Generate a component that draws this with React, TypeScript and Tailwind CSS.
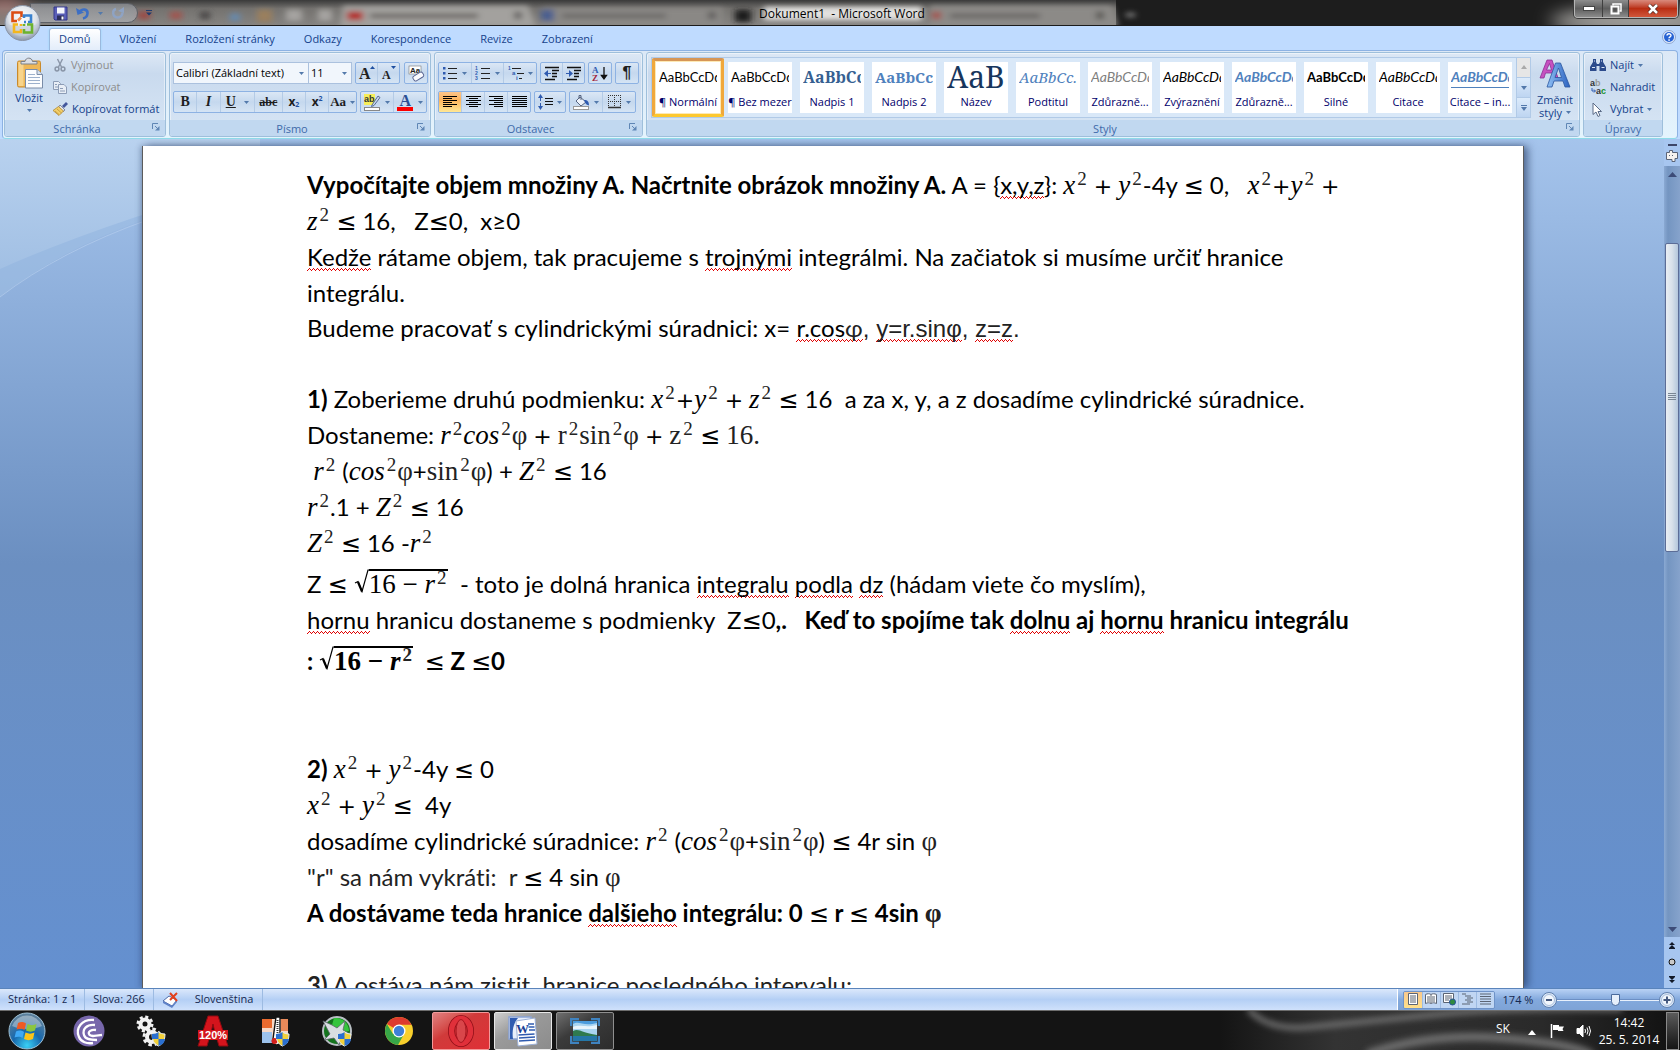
import type { ReactNode } from 'react';
import clsx from 'clsx';

interface Kids {
  children?: ReactNode;
}

/* ---------- small shared pieces ---------- */

const Arrow = () => (
  <svg width="5" height="3" viewBox="0 0 5 3" className="shrink-0">
    <path d="M0 0h5L2.500 3z" fill="#5379ab" />
  </svg>
);

const Launcher = ({ label }: { label: string }) => (
  <button aria-label={label} className="absolute right-1 top-0.5 p-px">
    <svg width="8" height="8" viewBox="0 0 8 8" fill="none">
      <path d="M.5 6V.5H6" stroke="#5f86b5" />
      <path d="M3 3l3 3" stroke="#5f86b5" />
      <path d="M7.500 3v4.500H3z" fill="#5f86b5" />
    </svg>
  </button>
);

interface GroupProps extends Kids {
  title: string;
  className?: string;
  launcher?: boolean;
}

const Group = ({ title, className, launcher = true, children }: GroupProps) => (
  <section
    className={clsx(
      'flex flex-col overflow-hidden rounded-[3px] border border-[#9ebfdb] bg-linear-to-b from-[#dde8f5] via-[#c9daee] via-25% to-[#d8e6f5] shadow-[inset_0_0_0_1px_rgba(255,255,255,0.45)]',
      className,
    )}
  >
    <div className="flex min-h-0 flex-1">{children}</div>
    <div className={clsx('relative h-4 bg-[#c1d8f0] text-center text-[11px] leading-[17px] text-[#3e6aaa]', launcher && 'pr-4')}>
      {title}
      {launcher && <Launcher label={`${title} – dialog`} />}
    </div>
  </section>
);

const ButtonSet = ({ children }: Kids) => (
  <div className="flex h-[22px] divide-x divide-[#b4cbe6] overflow-hidden rounded-[2px] border border-[#8db2e3] bg-linear-to-b from-[#dbe7f5] via-[#c5d8ee] via-50% to-[#d5e4f4]">
    {children}
  </div>
);

interface ToolProps extends Kids {
  label: string;
  active?: boolean;
  drop?: boolean;
  className?: string;
}

const Tool = ({ label, active, drop, className, children }: ToolProps) => (
  <button
    aria-label={label}
    className={clsx(
      'flex flex-1 items-center justify-center gap-1 text-[#1e1e1e]',
      active && 'bg-linear-to-b from-[#fcc48a] via-[#fdb45c] via-40% to-[#ffe794]',
      className,
    )}
  >
    {children}
    {drop && <Arrow />}
  </button>
);

/* rows of horizontal strokes, used by the paragraph icons */
const Lines = ({ rows }: { rows: [number, number][] }) => (
  <svg width="15" height="12" viewBox="0 0 15 12" shapeRendering="crispEdges">
    {rows.map(([x, w], i) => (
      <rect key={i} x={x} y={i * 2} width={w} height="1" fill="#000" />
    ))}
  </svg>
);

/* ---------- title bar ---------- */

const OfficeButton = () => (
  <button aria-label="Tlačítko Office" className="absolute left-1 top-1">
    <svg width="37" height="38" viewBox="0 0 37 38">
      <defs>
        <radialGradient id="orb" cx="50%" cy="35%" r="65%">
          <stop offset="0" stopColor="#fff" />
          <stop offset=".6" stopColor="#dfe3ea" />
          <stop offset="1" stopColor="#8b97ab" />
        </radialGradient>
      </defs>
      <circle cx="18.500" cy="19" r="17.500" fill="url(#orb)" stroke="#8a94a6" />
      <path d="M3 20a16 16 0 0 0 31 0c-8 3-23 3-31 0z" fill="#c2cbd9" opacity=".6" />
      <g fill="none" strokeWidth="2.600">
        <path d="M13 17H8.500V8.500h9V13" stroke="#dc4c12" />
        <path d="M14 16.500l3-3" stroke="#f08a4a" />
        <path d="M20 14v-2.500h7V18h-3" stroke="#3b82cf" />
        <path d="M20 18h2" stroke="#3b82cf" />
        <path d="M14 20.500h-4V28h7v-3" stroke="#f4b61e" />
        <path d="M17 20v2" stroke="#f4b61e" />
        <path d="M23 20.500h5V28.500h-8V25" stroke="#6cb22e" />
        <path d="M20 20v2" stroke="#6cb22e" />
      </g>
    </svg>
  </button>
);

const QuickAccess = () => (
  <div className="ml-[30px] mt-[3px] flex h-5 items-center self-start rounded-r-full border border-[#5d6066] bg-linear-to-b from-[#9da1a8]/60 to-[#b5b8bd]/60 pl-[22px] pr-3">
    <button aria-label="Uložit">
      <svg width="15" height="15" viewBox="0 0 15 15">
        <path d="M1 1h13v13H2L1 13z" fill="#5a5fb8" stroke="#32378a" />
        <rect x="4" y="1.500" width="7.500" height="6" fill="#f4f6fc" />
        <rect x="4" y="9.500" width="7" height="4.500" fill="#2b2e5c" />
        <rect x="8.500" y="10.500" width="2" height="3" fill="#fff" />
      </svg>
    </button>
    <button aria-label="Zpět" className="ml-2 flex items-center gap-2">
      <svg width="14" height="14" viewBox="0 0 14 14" fill="none">
        <path d="M3 6.500C6 2 12 3 11.500 7.500 11.300 10 9 12 7 12.500" stroke="#3d6fc4" strokeWidth="2.600" />
        <path d="M0 2l1.500 7L8 6.500z" fill="#3d6fc4" />
      </svg>
      <Arrow />
    </button>
    <button aria-label="Znovu" className="ml-2">
      <svg width="14" height="14" viewBox="0 0 14 14" fill="none">
        <path d="M5 3C1 4 1 11 6.500 11.500c3 .2 5-2 5-5" stroke="#8ea3c4" strokeWidth="2.400" />
        <path d="M7 5l6-4v6z" fill="#8ea3c4" />
      </svg>
    </button>
  </div>
);

/* browser tabs showing through the glass title bar */
const GlassBackdrop = () => (
  <svg className="absolute inset-0 h-full w-full" viewBox="0 0 1680 26" preserveAspectRatio="none">
    <defs>
      <linearGradient id="glass" x1="0" x2="0" y1="0" y2="1">
        <stop offset="0" stopColor="#3a3a3a" />
        <stop offset=".35" stopColor="#74726f" />
        <stop offset="1" stopColor="#858380" />
      </linearGradient>
      <filter id="soft" x="-20%" y="-50%" width="140%" height="200%">
        <feGaussianBlur stdDeviation="3" />
      </filter>
      <filter id="softer" x="-20%" y="-80%" width="140%" height="260%">
        <feGaussianBlur stdDeviation="9" />
      </filter>
    </defs>
    <rect width="1680" height="26" fill="#1d1d1d" />
    <path d="M0 0h1116v26H0z" fill="url(#glass)" />
    <g filter="url(#soft)">
      <path d="M343 6h185l8 22H340z" fill="#a3a19e" />
      <path d="M543 8h180v20H540z" fill="#8a8885" />
      <path d="M930 6h182l6 22H930z" fill="#8c8a87" />
      <rect x="138" y="12" width="12" height="8" fill="#9c4a44" />
      <rect x="170" y="12" width="12" height="8" fill="#a05550" />
      <rect x="200" y="12" width="10" height="8" fill="#4b4a49" />
      <rect x="230" y="14" width="10" height="8" fill="#6689ad" />
      <rect x="257" y="10" width="15" height="13" fill="#9a7f5d" />
      <rect x="286" y="10" width="16" height="12" fill="#a5a3a0" />
      <rect x="318" y="10" width="14" height="12" fill="#a5a3a0" />
      <rect x="347" y="12" width="16" height="9" fill="#b32f2c" />
      <rect x="370" y="14" width="108" height="5" fill="#6e6b68" />
      <rect x="514" y="12" width="8" height="8" fill="#6a6866" />
      <rect x="541" y="10" width="13" height="12" fill="#4b5f8f" />
      <rect x="562" y="14" width="104" height="5" fill="#6d6b69" />
      <rect x="708" y="12" width="8" height="8" fill="#62605e" />
      <rect x="735" y="10" width="16" height="13" fill="#1b1b1b" />
      <rect x="764" y="7" width="158" height="14" fill="#e2e1df" />
      <rect x="932" y="12" width="9" height="8" fill="#a35450" />
      <rect x="950" y="14" width="90" height="5" fill="#6a6866" />
      <rect x="1096" y="12" width="8" height="8" fill="#5d5b59" />
      <rect x="1126" y="13" width="9" height="5" fill="#777" />
    </g>
    <g filter="url(#softer)">
      <ellipse cx="5" cy="4" rx="22" ry="7" fill="#b77a76" />
      <ellipse cx="1640" cy="22" rx="90" ry="14" fill="#a9a7a4" />
    </g>
  </svg>
);

const TitleBar = () => (
  <header className="relative h-[26px] shrink-0 border-b border-[#1b1b1b] shadow-[inset_0_-1px_0_#b3aea0]">
    <GlassBackdrop />
    <div className="relative flex h-full items-start">
      <QuickAccess />
      <button aria-label="Přizpůsobit panel" className="ml-2 mt-[10px]">
        <svg width="6" height="6" viewBox="0 0 6 6">
          <path d="M0 0h6v1H0zM0 2.500h6L3 5.500z" fill="#1f3b6e" />
        </svg>
      </button>
      <h1 className="absolute inset-x-0 top-[5px] whitespace-pre pl-1 text-center text-xs leading-[18px] text-black">
        Dokument1  - Microsoft Word
      </h1>
      <div className="relative ml-auto mr-[2px] flex h-[18px] overflow-hidden rounded-b-[4px] border border-t-0 border-[#b5b5b5] ring-1 ring-[#3b3b3b]">
        <button aria-label="Minimalizovat" className="flex w-7 items-center justify-center border-r border-[#3f3f3f] bg-linear-to-b from-[#8e8e8e] via-[#5e5e5e] via-50% to-[#8b8b8b]">
          <svg width="12" height="5" viewBox="0 0 12 5">
            <rect x=".5" y=".5" width="11" height="4" fill="#fff" stroke="#444" />
          </svg>
        </button>
        <button aria-label="Obnovit" className="flex w-[26px] items-center justify-center border-r border-[#3f3f3f] bg-linear-to-b from-[#8e8e8e] via-[#5e5e5e] via-50% to-[#8b8b8b]">
          <svg width="12" height="12" viewBox="0 0 12 12" fill="none">
            <path d="M3 2.500V1h8v7H9.500" stroke="#fff" strokeWidth="1.500" />
            <rect x="1.500" y="3.500" width="7" height="7" stroke="#fff" strokeWidth="2" />
            <rect x="4" y="6" width="2" height="2" stroke="#444" strokeWidth=".6" />
          </svg>
        </button>
        <button aria-label="Zavřít" className="flex w-12 items-center justify-center bg-linear-to-b from-[#d98a7c] via-[#b92d12] via-50% to-[#d0563a]">
          <svg width="12" height="10" viewBox="0 0 12 10" fill="none">
            <path d="M2 1l8 8M10 1L2 9" stroke="#4a2018" strokeWidth="4" />
            <path d="M2 1l8 8M10 1L2 9" stroke="#fff" strokeWidth="2.600" />
          </svg>
        </button>
      </div>
    </div>
    <OfficeButton />
  </header>
);

/* ---------- ribbon ---------- */

const tabs = ['Domů', 'Vložení', 'Rozložení stránky', 'Odkazy', 'Korespondence', 'Revize', 'Zobrazení'];

const TabRow = () => (
  <nav className="flex h-6 shrink-0 items-end gap-[9px] bg-[#bfdbff] pl-[49px] pr-1 text-[11px] text-[#15428b]">
    {tabs.map((tab, i) => (
      <button
        key={tab}
        className={clsx(
          'flex h-[22px] items-start whitespace-nowrap rounded-t-[3px] border border-b-0 px-[9px] leading-5',
          i === 0 ? 'border-[#9ab9de] bg-linear-to-b from-white to-[#e3edfa] shadow-[0_0_2px_#8fd8f5]' : 'border-transparent',
        )}
      >
        {tab}
      </button>
    ))}
    <button aria-label="Nápověda" className="mb-1.5 ml-auto">
      <svg width="14" height="14" viewBox="0 0 14 14">
        <circle cx="7" cy="7" r="6.500" fill="#dfeafc" stroke="#8fa6cf" />
        <circle cx="7" cy="7" r="5" fill="#2763d3" />
        <path d="M5 5.600C5 3.200 9 3.200 9 5.500 9 7 7 6.800 7 8.300" fill="none" stroke="#fff" strokeWidth="1.400" />
        <rect x="6.300" y="9.300" width="1.500" height="1.500" fill="#fff" />
      </svg>
    </button>
  </nav>
);

const Clipboard = () => (
  <Group title="Schránka" className="w-[162px]">
    <button className="flex w-12 flex-col items-center pt-1 text-[11px] text-[#15428b]">
      <svg width="28" height="32" viewBox="0 0 28 32">
        <rect x="2.500" y="4" width="23" height="26" rx="1.500" fill="#efb756" stroke="#c98a2c" />
        <rect x="3.500" y="5" width="5" height="24" fill="#f8d48b" />
        <path d="M6 7V4.500h4C10.500 0 17 0 17.500 4.500h4.500V7z" fill="#dcdfe4" stroke="#7d8088" />
        <path d="M10.500 12.500H22l5.500 5V31h-17z" fill="#fbfcfe" stroke="#7a8ca8" />
        <path d="M22 12.500v5h5.500" fill="#d5dfec" stroke="#7a8ca8" />
        <path d="M13 17.500h7M13 20.500h12M13 23.500h12M13 26.500h12" stroke="#9cb0cc" />
      </svg>
      <span className="leading-[18px]">Vložit</span>
      <span className="pt-0.5">
        <Arrow />
      </span>
    </button>
    <div className="flex flex-col pt-px text-[11px] leading-[22px]">
      <button className="flex items-center gap-1 text-[#8d8d8d]" disabled>
        <svg width="14" height="14" viewBox="0 0 14 14" fill="none" stroke="#8a96a8">
          <path d="M4.500 1l4 8M9.500 1l-4 8" strokeWidth="1.400" />
          <circle cx="4" cy="11" r="1.900" strokeWidth="1.500" />
          <circle cx="10" cy="11" r="1.900" strokeWidth="1.500" />
        </svg>
        Vyjmout
      </button>
      <button className="flex items-center gap-1 text-[#8d8d8d]" disabled>
        <svg width="14" height="14" viewBox="0 0 14 14" fill="#e8eef6" stroke="#8c9cb6">
          <path d="M.5 1.500h5l2 2v6h-7z" />
          <path d="M5.500 4.500h5.500l2.500 2.500v6.500h-8z" />
          <path d="M7 8.500h3M7 11h5M2 4.500h2M2 7h3" />
        </svg>
        Kopírovat
      </button>
      <button className="flex items-center gap-1 text-[#15428b]">
        <svg width="15" height="14" viewBox="0 0 15 14">
          <path d="M9 4l4-4 2 2-4 4z" fill="#44579c" />
          <path d="M7 3l5 5-2 1.500L5.500 5z" fill="#e9eaf0" stroke="#5c6277" strokeWidth=".7" />
          <path d="M5.500 4.500L10.500 9 6 13.500 0 8.500z" fill="#f2cf6a" stroke="#a9802a" strokeWidth=".7" />
          <path d="M2 9l4 3.500M4 7l4.500 4" stroke="#b98d31" strokeWidth=".7" />
        </svg>
        Kopírovat formát
      </button>
    </div>
  </Group>
);

const Combo = ({ label, value, className }: { label: string; value: string; className: string }) => (
  <div className={clsx('relative flex h-[22px] items-center border border-[#abc1de] bg-[#f1f6fc]', className)}>
    <select aria-label={label} className="h-full w-full appearance-none pl-[2px] text-[11px] leading-5 text-black outline-none">
      <option>{value}</option>
    </select>
    <span className="pointer-events-none absolute right-1">
      <Arrow />
    </span>
  </div>
);

const FontGroup = () => (
  <Group title="Písmo" className="w-[262px]">
    <div className="flex flex-1 flex-col gap-[7px] px-[3px] pt-[9px]">
      <div className="flex gap-[3px]">
        <div className="flex">
          <Combo label="Písmo" value="Calibri (Základní text)" className="w-[136px]" />
          <Combo label="Velikost písma" value="11" className="w-[43px] border-l-0" />
        </div>
        <div className="flex w-[45px] flex-col">
          <ButtonSet>
            <Tool label="Zvětšit písmo">
              <svg width="17" height="16" viewBox="0 0 17 16">
                <text x="1" y="14" fontSize="16" fontFamily="Liberation Serif" fontWeight="700" fill="#222">A</text>
                <path d="M12 4h5l-2.500-3z" fill="#1f4fa0" />
              </svg>
            </Tool>
            <Tool label="Zmenšit písmo">
              <svg width="15" height="16" viewBox="0 0 15 16">
                <text x="1" y="14" fontSize="12" fontFamily="Liberation Serif" fontWeight="700" fill="#222">A</text>
                <path d="M10 1h5l-2.500 3z" fill="#1f4fa0" />
              </svg>
            </Tool>
          </ButtonSet>
        </div>
        <div className="ml-px flex w-6 flex-col">
          <ButtonSet>
            <Tool label="Vymazat formátování">
              <svg width="17" height="17" viewBox="0 0 17 17">
                <rect x="1" y="1" width="12" height="8" fill="#fff" stroke="#777" strokeWidth=".6" />
                <text x="2" y="8" fontSize="8" fontFamily="Liberation Sans" fontWeight="700" fill="#222">Aa</text>
                <rect x="5" y="9" width="11" height="5.500" rx="2" transform="rotate(-32 10 12)" fill="#fafafe" stroke="#56618e" strokeWidth=".9" />
              </svg>
            </Tool>
          </ButtonSet>
        </div>
      </div>
      <div className="flex gap-[3px]">
        <div className="flex w-[184px] flex-col">
          <ButtonSet>
            <Tool label="Tučné" className="font-[Liberation_Serif,serif] text-sm font-bold">B</Tool>
            <Tool label="Kurzíva" className="font-[Liberation_Serif,serif] text-sm font-bold italic">I</Tool>
            <Tool label="Podtržené" drop className="flex-[1.5] gap-2 font-[Liberation_Serif,serif] text-sm font-bold">
              <span className="underline">U</span>
            </Tool>
            <Tool label="Přeškrtnuté" className="flex-[1.2] font-[Liberation_Serif,serif] text-xs font-bold">
              <span className="line-through">abc</span>
            </Tool>
            <Tool label="Dolní index" className="text-xs font-bold">
              <span className="flex items-end leading-3">x<small className="text-[7px] leading-[6px] text-[#1f4fa0]">2</small></span>
            </Tool>
            <Tool label="Horní index" className="text-xs font-bold">
              <span className="flex items-start leading-3">x<small className="text-[7px] leading-[6px] text-[#1f4fa0]">2</small></span>
            </Tool>
            <Tool label="Velká písmena" drop className="flex-[1.2] gap-0.5 font-[Liberation_Serif,serif] text-[13px] font-bold">Aa</Tool>
          </ButtonSet>
        </div>
        <div className="flex w-[67px] flex-col">
          <ButtonSet>
            <Tool label="Barva zvýraznění" drop>
              <svg width="17" height="17" viewBox="0 0 17 17">
                <rect width="11" height="11" fill="#f6ee5a" />
                <text x="0" y="8" fontSize="9" fontFamily="Liberation Sans" fontWeight="700" fill="#333">ab</text>
                <path d="M8 11l6-9 2 1.500-6 8-2.500 1z" fill="#c9d8f0" stroke="#3a4f80" strokeWidth=".8" />
                <rect x=".5" y="13.500" width="15" height="3" fill="#fff" stroke="#888" />
              </svg>
            </Tool>
            <Tool label="Barva písma" drop>
              <svg width="17" height="17" viewBox="0 0 17 17">
                <text x="2.500" y="12" fontSize="16" fontFamily="Liberation Serif" fontWeight="700" fill="#2b4f94">A</text>
                <rect x="0" y="13" width="16" height="4" fill="#fb0000" />
              </svg>
            </Tool>
          </ButtonSet>
        </div>
      </div>
    </div>
  </Group>
);

const ListIcon = ({ kind }: { kind: 'bullet' | 'number' | 'multi' }) => (
  <svg width="16" height="14" viewBox="0 0 16 14">
    {kind === 'bullet' && [2, 7, 12].map((y) => <rect key={y} x="1" y={y - 1} width="2.500" height="2.500" fill="#2f5bb0" />)}
    {kind === 'number' &&
      [1, 2, 3].map((n) => (
        <text key={n} x="0" y={n * 5 - 1} fontSize="5" fontFamily="Liberation Sans" fontWeight="700" fill="#2f5bb0">{n}</text>
      ))}
    {kind === 'multi' ? (
      <>
        <text x="0" y="4" fontSize="5" fontFamily="Liberation Sans" fontWeight="700" fill="#2f5bb0">1</text>
        <text x="4" y="9" fontSize="6" fontFamily="Liberation Sans" fontWeight="700" fill="#2f5bb0">a</text>
        <text x="8" y="14" fontSize="6" fontFamily="Liberation Sans" fontWeight="700" fill="#2f5bb0">i</text>
        <path d="M4 2.500h9M9 7.500h7M11 12.500h3" stroke="#222" />
      </>
    ) : (
      <path d="M6 2.500h9M6 7.500h9M6 12.500h9" stroke="#222" />
    )}
  </svg>
);

const IndentIcon = ({ right = false }: { right?: boolean }) => (
  <svg width="16" height="15" viewBox="0 0 16 15">
    <path d="M1 1.500h14M8 4.500h7M8 7.500h5M8 10.500h5M1 13.500h10" stroke="#111" strokeWidth="1.400" />
    <path d={right ? 'M0 7h3V4l4 3.500L3 11V8H0z' : 'M7 7H4V4L0 7.500 4 11V8h3z'} fill="#2f5bb0" />
  </svg>
);

const Paragraph = () => (
  <Group title="Odstavec" className="w-[209px]">
    <div className="flex flex-1 flex-col gap-[7px] px-[3px] pt-[9px]">
      <div className="flex gap-[3px]">
        <div className="flex w-[99px] flex-col">
          <ButtonSet>
            <Tool label="Odrážky" drop><ListIcon kind="bullet" /></Tool>
            <Tool label="Číslování" drop><ListIcon kind="number" /></Tool>
            <Tool label="Víceúrovňový seznam" drop className="gap-0.5"><ListIcon kind="multi" /></Tool>
          </ButtonSet>
        </div>
        <div className="flex w-[45px] flex-col">
          <ButtonSet>
            <Tool label="Zmenšit odsazení"><IndentIcon /></Tool>
            <Tool label="Zvětšit odsazení"><IndentIcon right /></Tool>
          </ButtonSet>
        </div>
        <div className="flex w-6 flex-col">
          <ButtonSet>
            <Tool label="Seřadit">
              <svg width="16" height="16" viewBox="0 0 16 16">
                <text x="0" y="7.500" fontSize="9" fontFamily="Liberation Serif" fontWeight="700" fill="#2f5bb0">A</text>
                <text x="0" y="15.500" fontSize="9" fontFamily="Liberation Serif" fontWeight="700" fill="#a3263c">Z</text>
                <path d="M12 2v11M9.500 10.500L12 14l2.500-3.500z" stroke="#111" strokeWidth="1.300" fill="#111" />
              </svg>
            </Tool>
          </ButtonSet>
        </div>
        <div className="flex w-6 flex-col">
          <ButtonSet>
            <Tool label="Zobrazit vše" className="font-[Liberation_Sans,sans-serif] text-base font-bold leading-none">¶</Tool>
          </ButtonSet>
        </div>
      </div>
      <div className="flex gap-[3px]">
        <div className="flex w-[93px] flex-col">
          <ButtonSet>
            <Tool label="Zarovnat vlevo" active><Lines rows={[[0, 14], [0, 9], [0, 14], [0, 9], [0, 14], [0, 9]]} /></Tool>
            <Tool label="Na střed"><Lines rows={[[0, 15], [3, 9], [0, 15], [3, 9], [0, 15], [3, 9]]} /></Tool>
            <Tool label="Zarovnat vpravo"><Lines rows={[[0, 14], [5, 9], [0, 14], [5, 9], [0, 14], [5, 9]]} /></Tool>
            <Tool label="Do bloku"><Lines rows={[[0, 15], [0, 15], [0, 15], [0, 15], [0, 15], [0, 15]]} /></Tool>
          </ButtonSet>
        </div>
        <div className="flex w-8 flex-col">
          <ButtonSet>
            <Tool label="Řádkování" drop>
              <svg width="15" height="16" viewBox="0 0 15 16">
                <path d="M2.500 2v12" stroke="#2f5bb0" strokeDasharray="5 2" />
                <path d="M0 4l2.500-4L5 4zM0 12l2.500 4L5 12z" fill="#2f5bb0" />
                <path d="M7 4.500h8M7 7.500h8M7 10.500h8" stroke="#111" />
              </svg>
            </Tool>
          </ButtonSet>
        </div>
        <div className="flex w-[67px] flex-col">
          <ButtonSet>
            <Tool label="Stínování" drop>
              <svg width="17" height="16" viewBox="0 0 17 16">
                <path d="M7 3l6 5-5 4-5-5z" fill="#eef3fb" stroke="#55637f" />
                <path d="M6 5V1.500h2V6" fill="none" stroke="#55637f" />
                <path d="M11 6c4 0 5 2 5 5.500-2-1-3-1-4-3z" fill="#2f5bb0" />
                <rect x=".5" y="12.500" width="15" height="3" fill="#fff" stroke="#999" />
              </svg>
            </Tool>
            <Tool label="Ohraničení" drop>
              <svg width="14" height="14" viewBox="0 0 14 14" fill="none" stroke="#333">
                <path d="M.5 0v12M12.500 0v12M6.500 0v12M0 .5h13M0 6.500h13" strokeDasharray="1 1" />
                <path d="M0 12.500h13" strokeWidth="1.500" />
              </svg>
            </Tool>
          </ButtonSet>
        </div>
      </div>
    </div>
  </Group>
);

interface TextStyle {
  name: string;
  sample: string;
  look: string;
}

const textStyles: TextStyle[] = [
  { name: '¶ Normální', sample: 'AaBbCcDd', look: 'text-[13px] text-black' },
  { name: '¶ Bez mezer', sample: 'AaBbCcDd', look: 'text-[13px] text-black' },
  { name: 'Nadpis 1', sample: 'AaBbCc', look: 'font-[Noto_Serif,Liberation_Serif,serif] text-base font-bold text-[#365f91]' },
  { name: 'Nadpis 2', sample: 'AaBbCc', look: 'font-[Noto_Serif,Liberation_Serif,serif] text-[15px] font-bold text-[#4f81bd]' },
  { name: 'Název', sample: 'AaB', look: 'font-[Noto_Serif,Liberation_Serif,serif] text-[30px] text-[#17365d]' },
  { name: 'Podtitul', sample: 'AaBbCc.', look: 'font-[Noto_Serif,Liberation_Serif,serif] text-[15px] italic text-[#4f81bd]' },
  { name: 'Zdůrazně...', sample: 'AaBbCcDd', look: 'text-sm italic text-[#808080]' },
  { name: 'Zvýraznění', sample: 'AaBbCcDd', look: 'text-sm italic text-black' },
  { name: 'Zdůrazně...', sample: 'AaBbCcDd', look: 'text-sm font-bold italic text-[#4f81bd]' },
  { name: 'Silné', sample: 'AaBbCcDd', look: 'text-[13px] font-bold text-black' },
  { name: 'Citace', sample: 'AaBbCcDd', look: 'text-sm italic text-black' },
  { name: 'Citace – in...', sample: 'AaBbCcDd', look: 'border-b border-[#4f81bd] text-sm font-bold italic text-[#4f81bd]' },
];

const galleryArrows = ['M0 4h6L3 0z', 'M0 1h6L3 5z', 'M0 0h6v1H0zM0 2h6L3 6z'];
const galleryLabels = ['Předchozí řádek', 'Další řádek', 'Více'];

const Styles = () => (
  <Group title="Styly" className="min-w-0 flex-1">
    <div className="ml-1 mt-1 flex h-[61px] min-w-0 flex-1 border border-[#b1cae7] bg-[#d9e8f8]">
      <div className="flex min-w-0 flex-1 overflow-hidden">
        {textStyles.map((s, i) => (
          <button
            key={i}
            className={clsx(
              'flex w-[72px] shrink-0 border-[3px] p-px',
              i === 0 ? 'rounded-[2px] border-t-[#d69656] border-r-[#f0a83c] border-b-[#fdc82f] border-l-[#f0a83c] bg-[#fde9b5]' : 'border-transparent',
            )}
          >
            <span className="flex min-w-0 flex-1 flex-col justify-between overflow-hidden bg-white pb-[3px] pt-1">
              <span className={clsx('mx-[3px] flex h-[22px] items-center overflow-hidden whitespace-nowrap font-[Lato,sans-serif] leading-[22px]', s.look)}>
                {s.sample}
              </span>
              <span className="whitespace-nowrap text-center text-[11px] leading-4 text-[#00006b]">{s.name}</span>
            </span>
          </button>
        ))}
      </div>
      <div className="flex w-3.5 flex-col divide-y divide-[#b1cae7] border-l border-[#b1cae7]">
        {galleryArrows.map((d, i) => (
          <button
            key={d}
            aria-label={galleryLabels[i]}
            className={clsx('flex flex-1 items-center justify-center', i === 0 ? 'bg-[#e6e6e6]' : 'bg-linear-to-b from-[#dcebfb] to-[#bed5f1]')}
          >
            <svg width="6" height="6" viewBox="0 0 6 6">
              <path d={d} fill={i === 0 ? '#a9a9a9' : '#5379ab'} />
            </svg>
          </button>
        ))}
      </div>
    </div>
    <button className="flex w-12 shrink-0 flex-col items-center pt-1.5 text-[11px] leading-[13px] text-[#15428b]">
      <svg width="32" height="30" viewBox="0 0 32 30">
        <defs>
          <linearGradient id="blueA" x1="0" x2="1">
            <stop offset="0" stopColor="#8fc0f5" />
            <stop offset="1" stopColor="#2c62c0" />
          </linearGradient>
        </defs>
        <path d="M1 19L8 1h5l6 18h-4l-1.500-5H6.500L5 19zM7.500 11h5L10.500 4.500z" fill="#c651c0" stroke="#8b2f94" strokeWidth=".8" fillRule="evenodd" />
        <path d="M8 28L16.500 4h5L31 28h-5l-2-6h-9l-2 6zM16 18.500h6.500L19.500 9z" fill="url(#blueA)" stroke="#2b57a0" strokeWidth=".8" fillRule="evenodd" />
      </svg>
      <span className="pt-1">Změnit</span>
      <span className="flex items-center gap-1">styly <Arrow /></span>
    </button>
  </Group>
);

const Editing = () => (
  <Group title="Úpravy" className="w-[80px]" launcher={false}>
    <div className="flex flex-col pl-1.5 pt-px text-[11px] leading-[22px] text-[#15428b]">
      <button className="flex items-center gap-1">
        <svg width="16" height="14" viewBox="0 0 16 14">
          <path d="M3 1h3v3l1 2h2l1-2V1h3v3l3 5v4H9.500V8h-3v5H0V9l3-5z" fill="#2c4b8c" />
          <path d="M2 9.500h3M11.500 9.500h3M4 3h1M11 3h1" stroke="#dbe6f7" strokeWidth="1.200" />
        </svg>
        Najít <Arrow />
      </button>
      <button className="flex items-center gap-1">
        <svg width="16" height="16" viewBox="0 0 16 16">
          <text x="0" y="7" fontSize="9" fontFamily="Liberation Sans" fontWeight="700" fill="#333">a<tspan fill="#999">b</tspan></text>
          <path d="M2 9v3h3M4 10.500L5.500 12 4 13.500" stroke="#2f5bb0" fill="none" />
          <text x="6" y="14.500" fontSize="9" fontFamily="Liberation Sans" fontWeight="700" fill="#333">a<tspan fill="#19912b">c</tspan></text>
        </svg>
        Nahradit
      </button>
      <button className="flex items-center gap-1">
        <svg width="16" height="15" viewBox="0 0 16 15">
          <path d="M3 1v11.500L6 10l2 4.500 2-1-2-4h3.500z" fill="#fff" stroke="#5b6b86" />
        </svg>
        Vybrat <Arrow />
      </button>
    </div>
  </Group>
);

const Ribbon = () => (
  <div className="shrink-0 bg-[#bfdbff] px-[2px]">
    <div className="flex h-[89px] gap-[3px] rounded-[4px] border border-[#8db2e3] border-b-[#8edbe8] bg-linear-to-b from-[#dce8f6] to-[#e4f4fd] px-px pb-px pr-[14px] pt-px">
      <Clipboard />
      <FontGroup />
      <Paragraph />
      <Styles />
      <Editing />
    </div>
  </div>
);

/* ---------- document ---------- */

const V = ({ children }: Kids) => <i className="font-[Liberation_Serif,serif] text-[27px] leading-none">{children}</i>;
const M = ({ children }: Kids) => (
  <span className="font-[Liberation_Serif,serif] text-[27px] leading-none text-[#222222]">{children}</span>
);
const Two = () => <sup className="pl-0.5 pr-px font-[Liberation_Serif,serif] text-[19px] text-[#222222]">2</sup>;
const Le = () => <span className="font-[DejaVu_Sans,sans-serif] text-2xl font-normal leading-none">≤</span>;
const Plus = ({ tight }: { tight?: boolean }) => (
  <span className={clsx('font-[DejaVu_Sans,sans-serif] text-[22px] font-normal leading-none', !tight && 'px-1.5')}>+</span>
);

/* misspelled word with the red zigzag below it */
const Sp = ({ children }: Kids) => (
  <span className="bg-[linear-gradient(90deg,#e00000_1px,transparent_1px),linear-gradient(90deg,#e00000_1px,transparent_1px),linear-gradient(90deg,#e00000_1px,transparent_1px)] bg-[length:4px_1px,2px_1px,4px_1px] bg-[position:0_100%,1px_calc(100%_-_1px),2px_calc(100%_-_2px)] bg-repeat-x">
    {children}
  </span>
);

const Root = ({ children }: Kids) => (
  <span className="inline-flex items-baseline">
    <svg width="15" height="24" viewBox="0 0 15 24" fill="none" stroke="#000">
      <path d="M1 14l3-1.500 4 10L14 1h1" strokeWidth="1.200" />
      <path d="M4 13l4 9.500" strokeWidth="2.200" />
    </svg>
    <span className="border-t-2 border-black font-[Liberation_Serif,serif] text-[27px] leading-6">{children}</span>
  </span>
);

const heights = { normal: 'h-9', short: 'h-[35px]', tall: 'h-[41px] pt-[5px]' };

const Row = ({ children, size = 'normal' }: Kids & { size?: keyof typeof heights }) => (
  <p className={clsx('shrink-0 whitespace-pre leading-9', heights[size])}>{children}</p>
);

const Page = () => (
  <article className="flex min-w-0 flex-1 flex-col overflow-hidden border-x border-[#5c5c5c] bg-white pl-[164px] pt-[21px] font-[Lato,sans-serif] text-2xl text-black shadow-[4px_0_8px_rgba(30,50,90,0.6),-2px_0_5px_rgba(30,50,90,0.25)] [font-variant-ligatures:none]">
    <Row>
      <b>Vypočítajte objem množiny A. Načrtnite obrázok množiny A.</b> A = {'{'}<Sp>x,y,z</Sp>{'}'}: <V>x</V><Two /><Plus /><V>y</V><Two />-4y <Le /> 0,   <V>x</V><Two /><Plus tight /><V>y</V><Two /><Plus />
    </Row>
    <Row><V>z</V><Two /> <Le /> 16,   Z<Le />0,  x≥0</Row>
    <Row><Sp>Kedže</Sp> rátame objem, tak pracujeme s <Sp>trojnými</Sp> integrálmi. Na začiatok si musíme určiť hranice</Row>
    <Row size="short">integrálu.</Row>
    <Row>
      Budeme pracovať s cylindrickými súradnici: x= <Sp>r.cos<span className="text-[#222222]">φ</span></Sp>
      <span className="font-[Liberation_Sans,sans-serif] leading-none text-[#222222]">, <Sp>y=r.sinφ</Sp>, <Sp>z=z</Sp>.</span>
    </Row>
    <Row size="short" />
    <Row>
      <b>1)</b> Zoberieme druhú podmienku: <V>x</V><Two /><Plus tight /><V>y</V><Two /><Plus /><V>z</V><Two /> <Le /> 16  a za x, y, a z dosadíme cylindrické súradnice.
    </Row>
    <Row>
      Dostaneme: <V>r</V><Two /><V>cos</V><Two /><M>φ</M><Plus /><M>r</M><Two /><M>sin</M><Two /><M>φ</M><Plus /><M>z</M><Two /> <Le /> <M>16.</M>
    </Row>
    <Row> <V>r</V><Two /> (<V>cos</V><Two /><M>φ</M>+<M>sin</M><Two /><M>φ</M>) + <V>Z</V><Two /> <Le /> 16</Row>
    <Row><V>r</V><Two />.1 + <V>Z</V><Two /> <Le /> 16</Row>
    <Row><V>Z</V><Two /> <Le /> 16 -<V>r</V><Two /></Row>
    <Row size="tall">
      Z <Le /> <Root>16 − <V>r</V><Two /></Root>  - toto je dolná hranica <Sp>integralu</Sp> <Sp>podla</Sp> <Sp>dz</Sp> (hádam viete čo myslím),
    </Row>
    <Row>
      <Sp>hornu</Sp> hranicu dostaneme s podmienky  Z<Le />0<b>,.   Keď to spojíme tak <Sp>dolnu</Sp> aj <Sp>hornu</Sp> hranicu integrálu</b>
    </Row>
    <Row size="tall">
      <b>: <Root>16 − <V>r</V><Two /></Root>  <Le /> Z <Le />0</b>
    </Row>
    <Row />
    <Row />
    <Row><b>2)</b> <V>x</V><Two /><Plus /><V>y</V><Two />-4y <Le /> 0</Row>
    <Row><V>x</V><Two /><Plus /><V>y</V><Two /> <Le />  4y</Row>
    <Row>
      dosadíme cylindrické súradnice: <V>r</V><Two /> (<V>cos</V><Two /><M>φ</M>+<M>sin</M><Two /><M>φ</M>) <Le /> 4r sin <M>φ</M>
    </Row>
    <Row><span className="text-[#222222]">"r" sa nám vykráti:  r</span> <Le /> 4 sin <M>φ</M></Row>
    <Row>
      <b>A dostávame teda hranice <Sp>dalšieho</Sp> integrálu: 0 <Le /> r <Le /> 4sin <M>φ</M></b>
    </Row>
    <Row />
    <Row><span className="text-[#222222]"><b>3)</b> A ostáva nám zistit  hranice posledného intervalu:</span></Row>
  </article>
);

const ScrollColumn = () => (
  <aside className="flex w-4 shrink-0 flex-col items-center bg-[#a7c6f0]">
    <div className="mt-[5px] h-0.5 w-[9px] shrink-0 bg-[#3d4668]" />
    <button aria-label="Pravítko" className="mb-1 mt-1 shrink-0">
      <svg width="12" height="12" viewBox="0 0 12 12" fill="#f6f3f0" stroke="#5a6478">
        <path d="M.5 2.500h3V.5h3v2H11.500v6H9v3H6v-2H.5z" />
        <path d="M3 5l1 1M6 5l1 1" />
      </svg>
    </button>
    <div className="flex w-4 flex-1 flex-col items-center bg-linear-to-r from-[#8aa9d3] via-[#7495c1] via-25% to-[#86a3cc]">
      <button aria-label="Nahoru" className="h-4 shrink-0">
        <svg width="9" height="5" viewBox="0 0 9 5"><path d="M0 5h9L4.500 0z" fill="#3d4c78" /></svg>
      </button>
      <div className="flex-[61_1_0%]" />
      <div className="flex w-3.5 flex-[308_1_0%] items-center justify-center rounded-[2px] border border-[#5c6d97] bg-linear-to-r from-[#e9eef4] via-[#d8e1ea] via-50% to-[#b4c7dc]">
        <svg width="8" height="8" viewBox="0 0 8 8"><path d="M0 .5h8M0 2.500h8M0 4.500h8M0 6.500h8" stroke="#7a8694" /></svg>
      </div>
      <div className="flex-[371_1_0%]" />
      <button aria-label="Dolů" className="h-4 shrink-0">
        <svg width="9" height="5" viewBox="0 0 9 5"><path d="M0 0h9L4.500 5z" fill="#3d4c78" /></svg>
      </button>
    </div>
    <div className="flex h-[51px] shrink-0 flex-col items-center justify-around">
      <button aria-label="Předchozí stránka">
        <svg width="6" height="7" viewBox="0 0 6 7"><path d="M3 0l3 3H0zM3 3l3 3H0zM0 6h6v1H0z" fill="#101828" /></svg>
      </button>
      <button aria-label="Vybrat objekt">
        <svg width="8" height="8" viewBox="0 0 8 8"><circle cx="4" cy="4" r="3" fill="#c9c9c9" stroke="#111" /></svg>
      </button>
      <button aria-label="Další stránka">
        <svg width="6" height="7" viewBox="0 0 6 7"><path d="M0 0h6v1H0zM0 1h6L3 4zM0 4h6L3 7z" fill="#101828" /></svg>
      </button>
    </div>
  </aside>
);

const Workspace = () => (
  <main className="relative flex min-h-0 flex-1 bg-linear-to-b from-[#a5c4ec] via-[#6b8fc1] via-50% to-[#6490d0]">
    <svg className="absolute left-0 top-0" width="260" height="160" viewBox="0 0 260 160">
      <defs>
        <linearGradient id="wave" x1="0" x2="0" y1="0" y2="1">
          <stop offset="0" stopColor="#b9d2ef" />
          <stop offset="1" stopColor="#a2c0e4" />
        </linearGradient>
      </defs>
      <path d="M0 0h260v50Q100 80 0 158z" fill="#a0bfe4" opacity=".5" />
      <path d="M0 158Q60 112 150 80" stroke="#b9d0ee" strokeOpacity=".6" fill="none" />
      <path d="M0 0h260v40Q100 85 0 130z" fill="url(#wave)" />
    </svg>
    <div className="relative flex min-w-0 flex-1 overflow-hidden pl-[142px] pr-[140px] pt-[7px]">
      <Page />
    </div>
    <ScrollColumn />
  </main>
);

/* ---------- status bar ---------- */

const viewIcons = [
  { label: 'Rozložení při tisku', d: 'M1.500.5h9v11h-9zM3 3h6M3 5h6M3 7h6M3 9h6' },
  { label: 'Čtení na celé obrazovce', d: 'M.5 1.500c2-1 4-1 5.500 0 1.500-1 3.500-1 5.500 0v9c-2-1-4-1-5.500 0-1.500-1-3.500-1-5.500 0zM6 2v8M2 4h3M2 6h3M2 8h3M7 4h3M7 6h3M7 8h3' },
  { label: 'Rozložení webové stránky', d: 'M.5.5h10v9H.5zM2 3h7M2 5h7M2 7h4' },
  { label: 'Osnova', d: 'M1 1h4M4 3h6M6 5h6M4 7h6M6 9h6M1 11h8' },
  { label: 'Koncept', d: 'M1 1h11M1 3.500h11M1 6h11M1 8.500h11M1 11h11' },
];

const ZoomButton = ({ label, d }: { label: string; d: string }) => (
  <button aria-label={label}>
    <svg width="16" height="16" viewBox="0 0 16 16">
      <circle cx="8" cy="8" r="7.500" fill="#dce8f7" stroke="#5f7fad" />
      <circle cx="8" cy="8" r="5.500" fill="#f1f6fc" stroke="#a9bfdd" />
      <path d={d} stroke="#44587e" strokeWidth="2" />
    </svg>
  </button>
);

const StatusBar = () => (
  <footer className="flex h-[22px] shrink-0 items-stretch border-t border-[#5a84bb] bg-linear-to-b from-[#dbe8fb] via-[#b4cff5] via-50% to-[#cfe1fb] text-[11px] leading-5 text-[#15284f]">
    <button className="flex w-[85px] border-r border-[#9dbbe2] pl-2">Stránka: 1 z 1</button>
    <button className="flex w-[69px] justify-center border-r border-[#9dbbe2]">Slova: 266</button>
    <button aria-label="Kontrola pravopisu" className="flex w-8 items-center justify-center">
      <svg width="17" height="16" viewBox="0 0 17 16">
        <path d="M1 9l6-5 8 4-5 6z" fill="#fff" stroke="#4d69a8" />
        <path d="M1 9v2l9 5 5-6V8l-5 6z" fill="#5f82c8" />
        <path d="M8 1l7 8M15 1L8 8" stroke="#e2401d" strokeWidth="2" />
      </svg>
    </button>
    <button className="flex w-[77px] justify-center border-r border-[#9dbbe2]">Slovenština</button>
    <div className="ml-auto flex items-center border-l border-white bg-linear-to-b from-[#b9d2f5] via-[#83a9dd] via-50% to-[#7ea3d6] pl-[5px] pr-[5px]">
      <div className="flex h-[18px] overflow-hidden rounded-[2px] border border-[#6f93c8]">
        {viewIcons.map((v, i) => (
          <button
            key={v.label}
            aria-label={v.label}
            className={clsx('flex w-[18px] items-center justify-center', i === 0 ? 'bg-linear-to-b from-[#f7c88d] to-[#ffe08a]' : 'border-l border-[#9dbbe2] bg-[#c0d6f3]')}
          >
            <svg width="13" height="13" viewBox="0 0 13 13" fill={i < 3 ? '#fff' : 'none'} stroke="#5b6473">
              <path d={v.d} />
              {i === 2 && <circle cx="9.500" cy="9" r="3" fill="#2f8a3f" stroke="#27519b" />}
            </svg>
          </button>
        ))}
      </div>
      <button className="w-[46px] text-center">174 %</button>
      <ZoomButton label="Oddálit" d="M5 8h6" />
      <input
        type="range"
        aria-label="Lupa"
        min="0"
        max="100"
        defaultValue="58"
        className="h-4 w-[102px] appearance-none bg-[linear-gradient(#6c8fc4,#6c8fc4),linear-gradient(#e7f0fc,#e7f0fc)] bg-[length:100%_1px,100%_1px] bg-[position:0_7px,0_8px] bg-no-repeat [&::-webkit-slider-thumb]:h-3 [&::-webkit-slider-thumb]:w-[9px] [&::-webkit-slider-thumb]:appearance-none [&::-webkit-slider-thumb]:rounded-b-full [&::-webkit-slider-thumb]:border [&::-webkit-slider-thumb]:border-[#4a6a9c] [&::-webkit-slider-thumb]:bg-[#e6effb]"
      />
      <ZoomButton label="Přiblížit" d="M4.500 8h7M8 4.500v7" />
    </div>
  </footer>
);

/* ---------- taskbar ---------- */

const Shield = () => (
  <g transform="translate(17 17)">
    <path d="M0 2c3 0 5-1 6.500-2C8 1 10 2 13 2c0 6-2 10-6.500 12C2 12 0 8 0 2z" fill="#f3d13a" stroke="#e8eef5" />
    <path d="M6.500 0v7H0V2c3 0 5-1 6.500-2zM6.500 7H13c-.5 4-3 6-6.500 7z" fill="#2a6fd0" />
  </g>
);

const StartIcon = () => (
  <svg width="38" height="38" viewBox="0 0 38 38">
    <defs>
      <radialGradient id="start" cx="50%" cy="90%" r="80%">
        <stop offset="0" stopColor="#39d0f5" />
        <stop offset=".5" stopColor="#1768ad" />
        <stop offset="1" stopColor="#5a7f9c" />
      </radialGradient>
    </defs>
    <circle cx="19" cy="19" r="18" fill="url(#start)" stroke="#9fc1d6" />
    <path d="M4 14a16 16 0 0 1 30 0c-8 4-22 4-30 0z" fill="#fff" opacity=".35" />
    <path d="M10 11c3-1.500 6-1 8 .5L16.500 18c-2-1.500-5-1.500-8-.5z" fill="#ee5a24" />
    <path d="M19.500 12c3 1.500 6 1.500 9 0L27 18.500c-3 1.500-6 1.500-9 0z" fill="#8cc63f" />
    <path d="M8 19.500c3-1.500 6-1 8 .5L14.500 26c-2-1.500-5-1.500-8-.5z" fill="#3fa9f5" />
    <path d="M17.500 20.500c3 1.500 6 1.500 9 0L25 27c-3 1.500-6 1.500-9 0z" fill="#fcc419" />
  </svg>
);

const pinned: { label: string; icon: ReactNode }[] = [
  {
    label: 'BitTorrent',
    icon: (
      <>
        <circle cx="16" cy="16" r="15.500" fill="#7767ab" />
        <g fill="none" stroke="#fff" strokeWidth="2.300">
          <path d="M21 5C9 4 2 13 6 22c2 5 8 7 14 6" />
          <path d="M22 10c-8-1-13 4-11 10 1 4 5 5 13 5" />
          <path d="M23 15c-5-1-8 2-7 4 1 3 6 2 13 1" />
        </g>
      </>
    ),
  },
  {
    label: 'Nastavení služeb',
    icon: (
      <>
        <g fill="none" stroke="#f2f2f2">
          <circle cx="10" cy="9" r="4.500" strokeWidth="4" />
          <circle cx="10" cy="9" r="7" strokeWidth="3" strokeDasharray="3 2.500" />
          <circle cx="17" cy="22" r="5" strokeWidth="4" />
          <circle cx="17" cy="22" r="8" strokeWidth="3" strokeDasharray="3.500 2.800" />
        </g>
        <Shield />
      </>
    ),
  },
  {
    label: 'Alcohol 120%',
    icon: (
      <>
        <path d="M11 1h10l10 30h-9l-2-7h-8l-2 7H1zM14 18h4l-2-9z" fill="#d4141c" stroke="#8f0a10" fillRule="evenodd" />
        <rect x="1" y="15" width="30" height="10" fill="#d4141c" />
        <text x="16" y="24" fontSize="11" fontFamily="Liberation Sans" fontWeight="700" textAnchor="middle" fill="#fff">120%</text>
      </>
    ),
  },
  {
    label: 'Teploměr',
    icon: (
      <>
        <rect x="3" y="4" width="26" height="24" rx="1" fill="#f6d9c8" />
        <rect x="3" y="4" width="10" height="9" fill="#ea6a2e" />
        <rect x="3" y="17" width="10" height="11" fill="#9cc2ec" />
        <rect x="22" y="4" width="7" height="12" fill="#e98a5a" />
        <path d="M14 24L17 2h4v22a4 4 0 1 1-7 0z" fill="#fff" stroke="#111" strokeWidth="1.400" />
        <path d="M18.500 5v18" stroke="#333" strokeDasharray="1 1" strokeWidth="2" />
        <circle cx="15.500" cy="26" r="3" fill="#d5201c" />
        <Shield />
      </>
    ),
  },
  {
    label: 'Jet',
    icon: (
      <>
        <circle cx="16" cy="16" r="14" fill="#14731d" stroke="#b9bfc4" strokeWidth="2" />
        <path d="M13 3c9-1 15 6 15 13l-8 2-9-8z" fill="#35c43d" />
        <path d="M2 6l9 4 5 3 8-7-2 9 7 4-8 1-3 10-5-7-10 2 6-6z" fill="#d9dde1" stroke="#5d646b" strokeWidth=".8" />
        <Shield />
      </>
    ),
  },
  {
    label: 'Chrome',
    icon: (
      <>
        <circle cx="16" cy="16" r="14" fill="#f8cf2c" />
        <path d="M16 16L3.900 9A14 14 0 0 1 28.500 9.700H16z" fill="#dd3b2f" />
        <path d="M3.900 9A14 14 0 0 0 15 30l5.500-10L16 16 10 19z" fill="#37a648" />
        <circle cx="16" cy="16" r="6.500" fill="#fff" />
        <circle cx="16" cy="16" r="5.200" fill="#3e7fd6" />
      </>
    ),
  },
];

const Tray = () => (
  <div className="relative ml-auto flex h-full items-center text-xs text-white">
    <button className="mr-4 w-[18px] pb-1">SK</button>
    <button aria-label="Skryté ikony" className="mr-3.5 mt-1">
      <svg width="8" height="5" viewBox="0 0 8 5"><path d="M0 5h8L4 0z" fill="#fff" /></svg>
    </button>
    <button aria-label="Centrum akcí" className="mr-2.5">
      <svg width="16" height="16" viewBox="0 0 16 16">
        <path d="M1.500 1v14" stroke="#fff" strokeWidth="1.500" />
        <path d="M3 2h6v1.500h5L12.500 6l1 2H8V7H3z" fill="#fff" />
      </svg>
    </button>
    <button aria-label="Hlasitost">
      <svg width="16" height="16" viewBox="0 0 16 16" fill="none" stroke="#fff">
        <path d="M1 5.500h2.500L7 2v12L3.500 10.500H1z" fill="#fff" />
        <path d="M9 6q1 2 0 4M11 4.500q2 3.500 0 7M13 3q3 5 0 10" />
      </svg>
    </button>
    <button className="w-[74px] text-center leading-[17px]">
      <time className="block">14:42</time>
      <time className="block whitespace-nowrap">25. 5. 2014</time>
    </button>
    <button aria-label="Zobrazit plochu" className="mr-px h-[38px] w-[13px] border border-[#8a8a8a] bg-linear-to-b from-[#5c5c5c] to-[#151515]" />
  </div>
);

const Taskbar = () => (
  <div className="relative flex h-10 shrink-0 items-center border-t border-[#6d6d6d] bg-[#141414]">
    <svg className="absolute right-0 top-0 h-full" width="460" height="39" viewBox="0 0 460 39">
      <defs>
        <filter id="taskSoft"><feGaussianBlur stdDeviation="3" /></filter>
        <linearGradient id="taskFade">
          <stop offset="0" stopColor="#141414" />
          <stop offset=".25" stopColor="#333" />
          <stop offset=".7" stopColor="#2a2a2a" />
          <stop offset="1" stopColor="#111" />
        </linearGradient>
      </defs>
      <rect width="460" height="39" fill="url(#taskFade)" />
      <g filter="url(#taskSoft)" fill="none" strokeLinecap="round">
        <path d="M30 0q20 20 60 16T210 4t190-6" stroke="#777" strokeWidth="5" />
        <path d="M150 42q60-20 130-15t90 16" stroke="#707070" strokeWidth="8" />
      </g>
    </svg>
    <button aria-label="Start" className="relative ml-2">
      <StartIcon />
    </button>
    <div className="ml-[27px] flex gap-[30px]">
      {pinned.map((p) => (
        <button key={p.label} aria-label={p.label}>
          <svg width="32" height="32" viewBox="0 0 32 32">{p.icon}</svg>
        </button>
      ))}
    </div>
    <div className="ml-[17px] flex gap-1">
      <button aria-label="Opera" className="flex h-[38px] w-[58px] items-center justify-center rounded-[2px] border border-[#f29a9a] bg-linear-to-br from-[#e08080] via-[#d03a3a] via-40% to-[#e02f36]">
        <svg width="28" height="32" viewBox="0 0 28 32">
          <ellipse cx="14" cy="16" rx="9.500" ry="12.500" fill="none" stroke="#8f0f18" strokeWidth="7" />
          <ellipse cx="14" cy="16" rx="9.500" ry="12.500" fill="none" stroke="#e0303a" strokeWidth="5.500" />
          <ellipse cx="14" cy="16" rx="5" ry="11.500" fill="#d9464a" stroke="#a8141e" />
        </svg>
      </button>
      <button aria-label="Microsoft Word" className="flex h-[38px] w-[58px] items-center justify-center rounded-[2px] border border-[#e8e8e8] bg-linear-to-br from-[#cfcfcf] via-[#9a9a9a] via-40% to-[#8c8c8c]">
        <svg width="32" height="32" viewBox="0 0 32 32">
          <path d="M2 2h22v22H2z" fill="#e8effb" stroke="#8aa4d6" strokeWidth="1.500" />
          <path d="M3 3h8C6 9 5 16 6 24H3z" fill="#2f5bb0" />
          <path d="M9 6l19-3 2 26-19 2z" fill="#fff" stroke="#9cb0d6" />
          <path d="M21 9h6M21.500 12h6M22 15h6M11.500 20l16-1M12 23l16-1M12 26l16-1" stroke="#2f5bb0" strokeWidth="1.600" />
          <text x="9" y="18" fontSize="13" fontFamily="Liberation Serif" fontWeight="700" fill="#1c3f96">W</text>
        </svg>
      </button>
      <button aria-label="Prohlížeč fotografií" className="flex h-[38px] w-[58px] items-center justify-center rounded-[2px] border border-[#8f8f8f] bg-linear-to-br from-[#6f6f6f] via-[#3b3b3b] via-40% to-[#2c2c2c]">
        <svg width="30" height="26" viewBox="0 0 30 26">
          <path d="M1 8V1h8M21 1h8v7M29 18v7h-8M9 25H1v-7" fill="none" stroke="#3f83c0" strokeWidth="2.500" />
          <rect x="3" y="3" width="24" height="20" fill="#a9d4f0" />
          <path d="M3 6c6-4 10 3 24-1V3H3z" fill="#4b9bdc" />
          <path d="M3 9c7-3 12 1 24-2v4H3z" fill="#e8f4fb" />
          <path d="M3 13c6-3 9 2 24 4v2H3z" fill="#2f7a4f" />
          <path d="M3 18h24v5H3z" fill="#2577a8" />
        </svg>
      </button>
    </div>
    <Tray />
  </div>
);

const App = () => (
  <div className="flex h-screen flex-col overflow-hidden font-[Open_Sans,sans-serif]">
    <TitleBar />
    <TabRow />
    <Ribbon />
    <Workspace />
    <StatusBar />
    <Taskbar />
  </div>
);

export default App;
